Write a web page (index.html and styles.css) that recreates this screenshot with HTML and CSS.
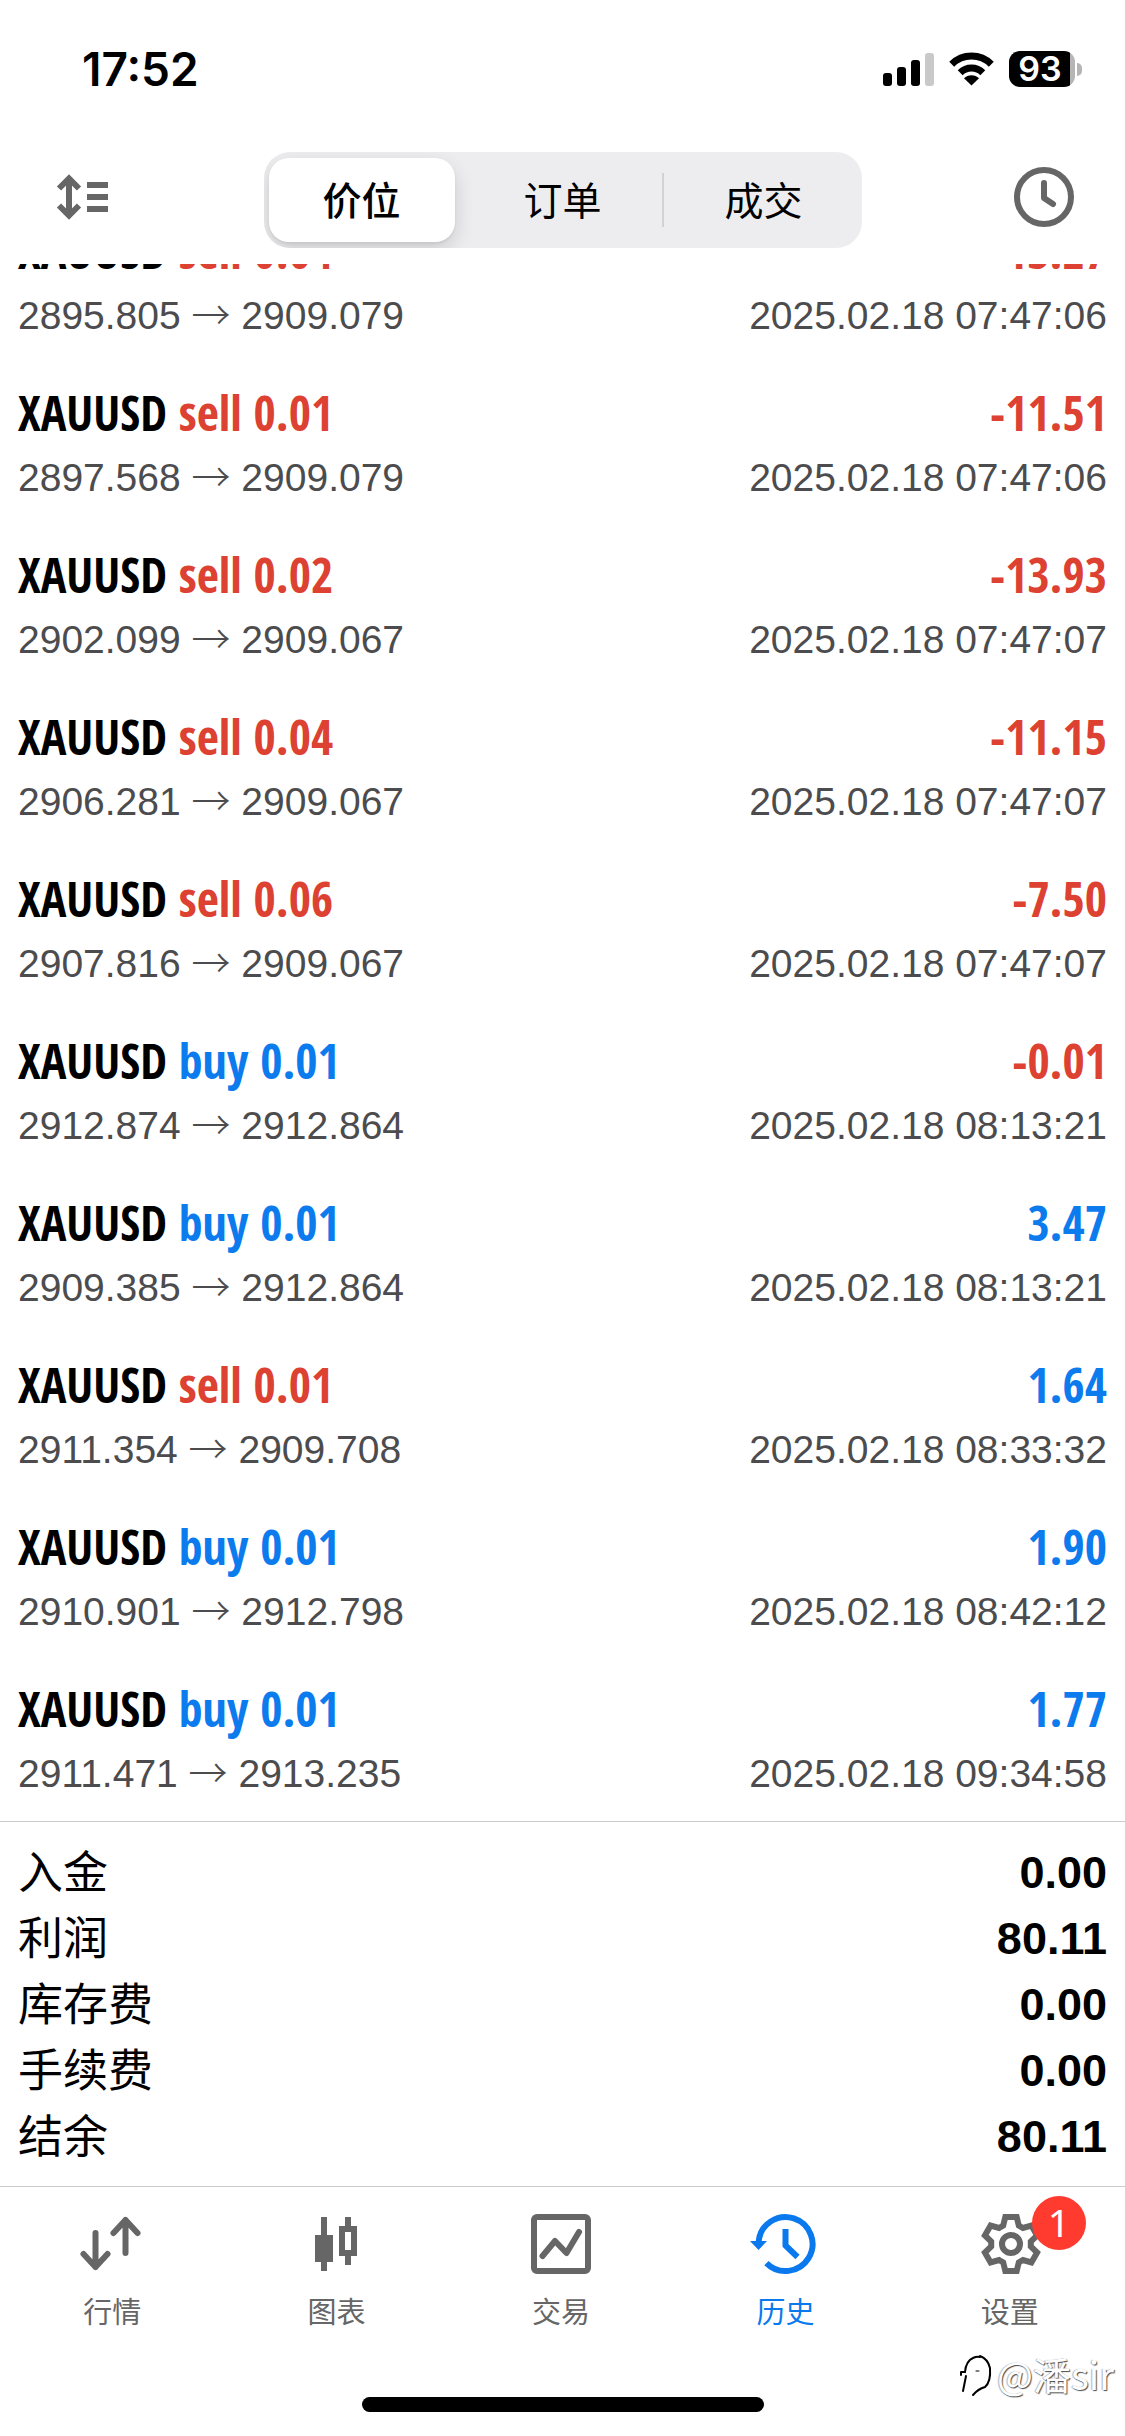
FILE: index.html
```
<!DOCTYPE html>
<html lang="zh-CN">
<head>
<meta charset="utf-8">
<meta name="viewport" content="width=device-width, initial-scale=1">
<title>历史</title>
<link rel="stylesheet" href="styles.css">
</head>
<body>
<div class="app">
  <div class="status">
    <time class="status-time">17:52</time>
    <div class="status-icons">
      <svg width="51" height="33" viewBox="0 0 51 33" aria-hidden="true">
        <rect x="0" y="20" width="9" height="13" rx="3"/>
        <rect x="14" y="14" width="9" height="19" rx="3"/>
        <rect x="28" y="7" width="9" height="26" rx="3"/>
        <rect x="42" y="0" width="9" height="33" rx="3" fill="#c9c9c9"/>
      </svg>
      <svg width="45" height="34" viewBox="0 0 45 34" aria-hidden="true">
        <path d="M2.7 12.2A28 28 0 0 1 42.3 12.2M11.2 20.7A16 16 0 0 1 33.8 20.7" fill="none" stroke="#000" stroke-width="7"/>
        <path d="M22.5 33.5L15 26.3A10.5 10.5 0 0 1 30 26.3Z"/>
      </svg>
      <div class="battery"><span class="battery-level">93</span><span class="battery-cap"></span></div>
    </div>
  </div>

  <header class="toolbar">
    <button class="icon-button" type="button" aria-label="排序">
      <svg width="60" height="60" viewBox="0 0 60 60" fill="none" stroke="#666" stroke-width="6" aria-hidden="true">
        <path d="M18 12V48M8 21.500L18 11.500L28 21.500M8 38.500L18 48.500L28 38.500"/>
        <path d="M36 18H57M36 30H57M36 42H57"/>
      </svg>
    </button>
    <div class="segments">
      <button class="segment segment-active" type="button" aria-pressed="true">价位</button>
      <button class="segment" type="button" aria-pressed="false">订单</button>
      <button class="segment segment-divided" type="button" aria-pressed="false">成交</button>
    </div>
    <button class="icon-button icon-button-end" type="button" aria-label="时间">
      <svg width="60" height="60" viewBox="0 0 60 60" fill="none" stroke="#666" stroke-width="6" stroke-linecap="round" stroke-linejoin="round" aria-hidden="true">
        <circle cx="30" cy="30" r="27"/>
        <path d="M30 16V31L39 37"/>
      </svg>
    </button>
  </header>

  <main class="history">
    <ul class="deals">
      <li class="deal">
        <div class="deal-head"><span>XAUUSD <span class="sell">sell 0.04</span></span><span class="loss">-13.27</span></div>
        <div class="deal-info"><span>2895.805 <span class="arrow">→</span> 2909.079</span><time>2025.02.18 07:47:06</time></div>
      </li>
      <li class="deal">
        <div class="deal-head"><span>XAUUSD <span class="sell">sell 0.01</span></span><span class="loss">-11.51</span></div>
        <div class="deal-info"><span>2897.568 <span class="arrow">→</span> 2909.079</span><time>2025.02.18 07:47:06</time></div>
      </li>
      <li class="deal">
        <div class="deal-head"><span>XAUUSD <span class="sell">sell 0.02</span></span><span class="loss">-13.93</span></div>
        <div class="deal-info"><span>2902.099 <span class="arrow">→</span> 2909.067</span><time>2025.02.18 07:47:07</time></div>
      </li>
      <li class="deal">
        <div class="deal-head"><span>XAUUSD <span class="sell">sell 0.04</span></span><span class="loss">-11.15</span></div>
        <div class="deal-info"><span>2906.281 <span class="arrow">→</span> 2909.067</span><time>2025.02.18 07:47:07</time></div>
      </li>
      <li class="deal">
        <div class="deal-head"><span>XAUUSD <span class="sell">sell 0.06</span></span><span class="loss">-7.50</span></div>
        <div class="deal-info"><span>2907.816 <span class="arrow">→</span> 2909.067</span><time>2025.02.18 07:47:07</time></div>
      </li>
      <li class="deal">
        <div class="deal-head"><span>XAUUSD <span class="buy">buy 0.01</span></span><span class="loss">-0.01</span></div>
        <div class="deal-info"><span>2912.874 <span class="arrow">→</span> 2912.864</span><time>2025.02.18 08:13:21</time></div>
      </li>
      <li class="deal">
        <div class="deal-head"><span>XAUUSD <span class="buy">buy 0.01</span></span><span class="gain">3.47</span></div>
        <div class="deal-info"><span>2909.385 <span class="arrow">→</span> 2912.864</span><time>2025.02.18 08:13:21</time></div>
      </li>
      <li class="deal">
        <div class="deal-head"><span>XAUUSD <span class="sell">sell 0.01</span></span><span class="gain">1.64</span></div>
        <div class="deal-info"><span>2911.354 <span class="arrow">→</span> 2909.708</span><time>2025.02.18 08:33:32</time></div>
      </li>
      <li class="deal">
        <div class="deal-head"><span>XAUUSD <span class="buy">buy 0.01</span></span><span class="gain">1.90</span></div>
        <div class="deal-info"><span>2910.901 <span class="arrow">→</span> 2912.798</span><time>2025.02.18 08:42:12</time></div>
      </li>
      <li class="deal">
        <div class="deal-head"><span>XAUUSD <span class="buy">buy 0.01</span></span><span class="gain">1.77</span></div>
        <div class="deal-info"><span>2911.471 <span class="arrow">→</span> 2913.235</span><time>2025.02.18 09:34:58</time></div>
      </li>
    </ul>
  </main>

  <dl class="summary">
    <div class="total"><dt>入金</dt><dd>0.00</dd></div>
    <div class="total"><dt>利润</dt><dd>80.11</dd></div>
    <div class="total"><dt>库存费</dt><dd>0.00</dd></div>
    <div class="total"><dt>手续费</dt><dd>0.00</dd></div>
    <div class="total"><dt>结余</dt><dd>80.11</dd></div>
  </dl>

  <nav class="tabs">
    <a class="tab" href="#quotes">
      <svg class="tab-icon" viewBox="0 0 60 60" fill="none" stroke="currentColor" stroke-width="6" stroke-linecap="round" stroke-linejoin="round" aria-hidden="true">
        <path d="M13.500 19V53M1.500 40L13.500 53L25.500 40M43.500 39V6M31.500 19L43.500 6L55.500 19"/>
      </svg>
      行情
    </a>
    <a class="tab" href="#charts">
      <svg class="tab-icon" viewBox="0 0 60 60" fill="currentColor" aria-hidden="true">
        <path d="M14 3H20V21H26V48H20V57H14V48H8V21H14Z"/>
        <path fill-rule="evenodd" d="M38 3H44V12H50V42H44V51H38V42H32V12H38ZM38 18V36H44V18Z"/>
      </svg>
      图表
    </a>
    <a class="tab" href="#trade">
      <svg class="tab-icon" viewBox="0 0 60 60" fill="none" stroke="currentColor" stroke-width="6" stroke-linecap="round" stroke-linejoin="round" aria-hidden="true">
        <rect x="3" y="3" width="54" height="54" rx="3"/>
        <path d="M11.500 42L24 27L35.500 39L48 18"/>
      </svg>
      交易
    </a>
    <a class="tab tab-active" href="#history" aria-current="page">
      <svg class="tab-icon" viewBox="-2 0 60 60" fill="none" stroke="currentColor" stroke-width="6" aria-hidden="true">
        <path d="M1.600 28A27 27 0 1 1 9.400 49.100M28.500 15V31.500L40.500 43"/>
        <path d="M-7 27H10L1.500 36Z" fill="currentColor" stroke="none"/>
      </svg>
      历史
    </a>
    <a class="tab" href="#settings">
      <span class="tab-badged">
        <svg class="tab-icon" viewBox="-31 -30 60 60" fill="none" stroke="currentColor" stroke-width="6" aria-hidden="true">
          <path d="M-7.800 -18.400L-5.700 -26.900H5.700L7.800 -18.400L12 -16L20.400 -18.400L26.100 -8.500L19.800 -2.500V2.500L26.100 8.500L20.400 18.400L12 16L7.800 18.400L5.700 26.900H-5.700L-7.800 18.400L-12 16L-20.400 18.400L-26.100 8.500L-19.800 2.500V-2.500L-26.100 -8.500L-20.400 -18.400L-12 -16Z"/>
          <circle r="9"/>
        </svg>
        <span class="badge">1</span>
      </span>
      设置
    </a>
  </nav>
  <div class="home-indicator"></div>

  <div class="watermark">
    <svg width="34" height="44" viewBox="0 0 34 44" fill="none" stroke="#000" stroke-linecap="round" aria-hidden="true">
      <path d="M1 20H5Q6 9 13 6Q17 4 20 5M1 20V23M6 24L3 39" stroke-width="2"/>
      <path d="M20 4Q28 7 30 16Q31 30 25 35Q18 37 13 43" stroke-width="2"/>
      <path d="M16 19H19" stroke-width="1"/>
    </svg>
    <span>@潘sir</span>
  </div>
</div>
</body>
</html>
```
FILE: styles.css
```
* {
  box-sizing: border-box;
}

body,
ul,
dl,
dd {
  margin: 0;
  padding: 0;
}

body {
  background: #fff;
  color: #000;
  font-family: "Liberation Sans", "Noto Sans CJK SC", sans-serif;
}

button {
  border: 0;
  padding: 0;
  background: none;
  font: inherit;
  color: inherit;
}

svg {
  display: block;
  overflow: visible;
}

.app {
  position: relative;
  display: flex;
  flex-direction: column;
  height: 100vh;
  overflow: hidden;
}

/* Status bar */
.status {
  display: flex;
  align-items: center;
  justify-content: space-between;
  height: 138px;
  padding: 0 43px 0 82px;
  font-family: Inter, sans-serif;
  font-weight: 600;
}

.status-time {
  font-size: 46px;
}

.status-icons,
.battery {
  display: flex;
  align-items: center;
}

.status-icons {
  gap: 15px;
}

.battery {
  gap: 2px;
}

.battery-level {
  width: 66px;
  height: 36px;
  padding-right: 4px;
  border-radius: 11px;
  background: linear-gradient(to right, #000 61px, #b5b5b5 61px);
  color: #fff;
  font-size: 34px;
  line-height: 36px;
  text-align: center;
}

.battery-cap {
  width: 5px;
  height: 13px;
  border-radius: 0 6px 6px 0;
  background: #b5b5b5;
}

/* Toolbar */
.toolbar {
  display: grid;
  grid-template-columns: 1fr auto 1fr;
  align-items: center;
  height: 126px;
  padding: 0 51px 2px;
}

.icon-button {
  justify-self: start;
  padding-bottom: 6px;
}

.icon-button-end {
  justify-self: end;
}

.segments {
  display: grid;
  grid-template-columns: repeat(3, 1fr);
  gap: 15px;
  width: 598px;
  height: 96px;
  padding: 6px 5px;
  border-radius: 26px;
  background: #ededef;
  overflow: hidden;
}

.segment {
  position: relative;
  padding-bottom: 4px;
  border-radius: 20px;
  font-size: 39px;
  font-weight: 400;
  font-family: "Noto Sans CJK SC", sans-serif;
  line-height: 80px;
}

.segment-active {
  background: #fff;
  box-shadow: 0 8px 20px rgba(0, 0, 0, 0.14), 0 2px 3px rgba(0, 0, 0, 0.06);
  font-weight: 500;
}

.segment-divided::before {
  content: "";
  position: absolute;
  left: -9px;
  top: 15px;
  bottom: 15px;
  width: 2px;
  background: #d2d2d5;
}

/* Deals: the list opens scrolled to its newest entry */
.history {
  display: flex;
  flex-direction: column-reverse;
  flex: 1 1 0;
  min-height: 0;
  overflow-y: auto;
  scrollbar-width: none;
}

.deals {
  list-style: none;
}

.deal {
  padding: 20px 18px 23px;
}

.deal-head,
.deal-info,
.total {
  display: flex;
  justify-content: space-between;
}

.deal-head {
  margin-bottom: 11px;
  font-family: "Avenir Next Condensed", "Open Sans Condensed", sans-serif;
  font-size: 48px;
  font-weight: 700;
  line-height: 60px;
}

.deal-info {
  color: #4c4c4e;
  font-size: 39px;
  line-height: 48px;
}

.arrow {
  font-family: "Noto Sans CJK SC", sans-serif;
  font-weight: 300;
  line-height: 1;
}

.sell,
.loss {
  color: #dc4132;
}

.buy,
.gain {
  color: #0c7bee;
}

/* Totals */
.summary {
  padding: 18px 18px 16px;
  border-top: 1px solid #ccc;
}

.total dt {
  font-family: "Noto Sans CJK SC", sans-serif;
  font-size: 45px;
  line-height: 60px;
}

.total dd {
  font-size: 45px;
  font-weight: 700;
  line-height: 66px;
}

/* Tab bar */
.tabs {
  display: grid;
  grid-template-columns: repeat(5, 1fr);
  padding: 27px 3px 67px 0;
  border-top: 1px solid #ccc;
}

.tab {
  display: flex;
  flex-direction: column;
  align-items: center;
  gap: 16px;
  color: #666;
  font-family: "Noto Sans CJK SC", sans-serif;
  font-size: 29px;
  line-height: 40px;
  text-decoration: none;
}

.tab-active {
  color: #0b79ee;
}

.tab-icon {
  width: 60px;
  height: 60px;
}

.tab-badged {
  position: relative;
}

.badge {
  position: absolute;
  left: 52px;
  top: -18px;
  width: 54px;
  height: 54px;
  border-radius: 50%;
  background: #ff3b30;
  color: #fff;
  font-family: "Noto Sans", sans-serif;
  font-size: 39px;
  line-height: 52px;
  text-align: center;
}

.home-indicator {
  width: 402px;
  height: 15px;
  margin: 0 auto 24px;
  border-radius: 8px;
  background: #000;
}

.watermark {
  position: absolute;
  right: 11px;
  bottom: 38px;
  display: flex;
  align-items: center;
  gap: 3px;
  color: #fff;
  font-family: "Noto Sans CJK SC", sans-serif;
  font-size: 38px;
  line-height: 48px;
  text-shadow: 1px 1px 1px rgba(0, 0, 0, 0.7), -1px 0 1px rgba(0, 0, 0, 0.3);
}
```
